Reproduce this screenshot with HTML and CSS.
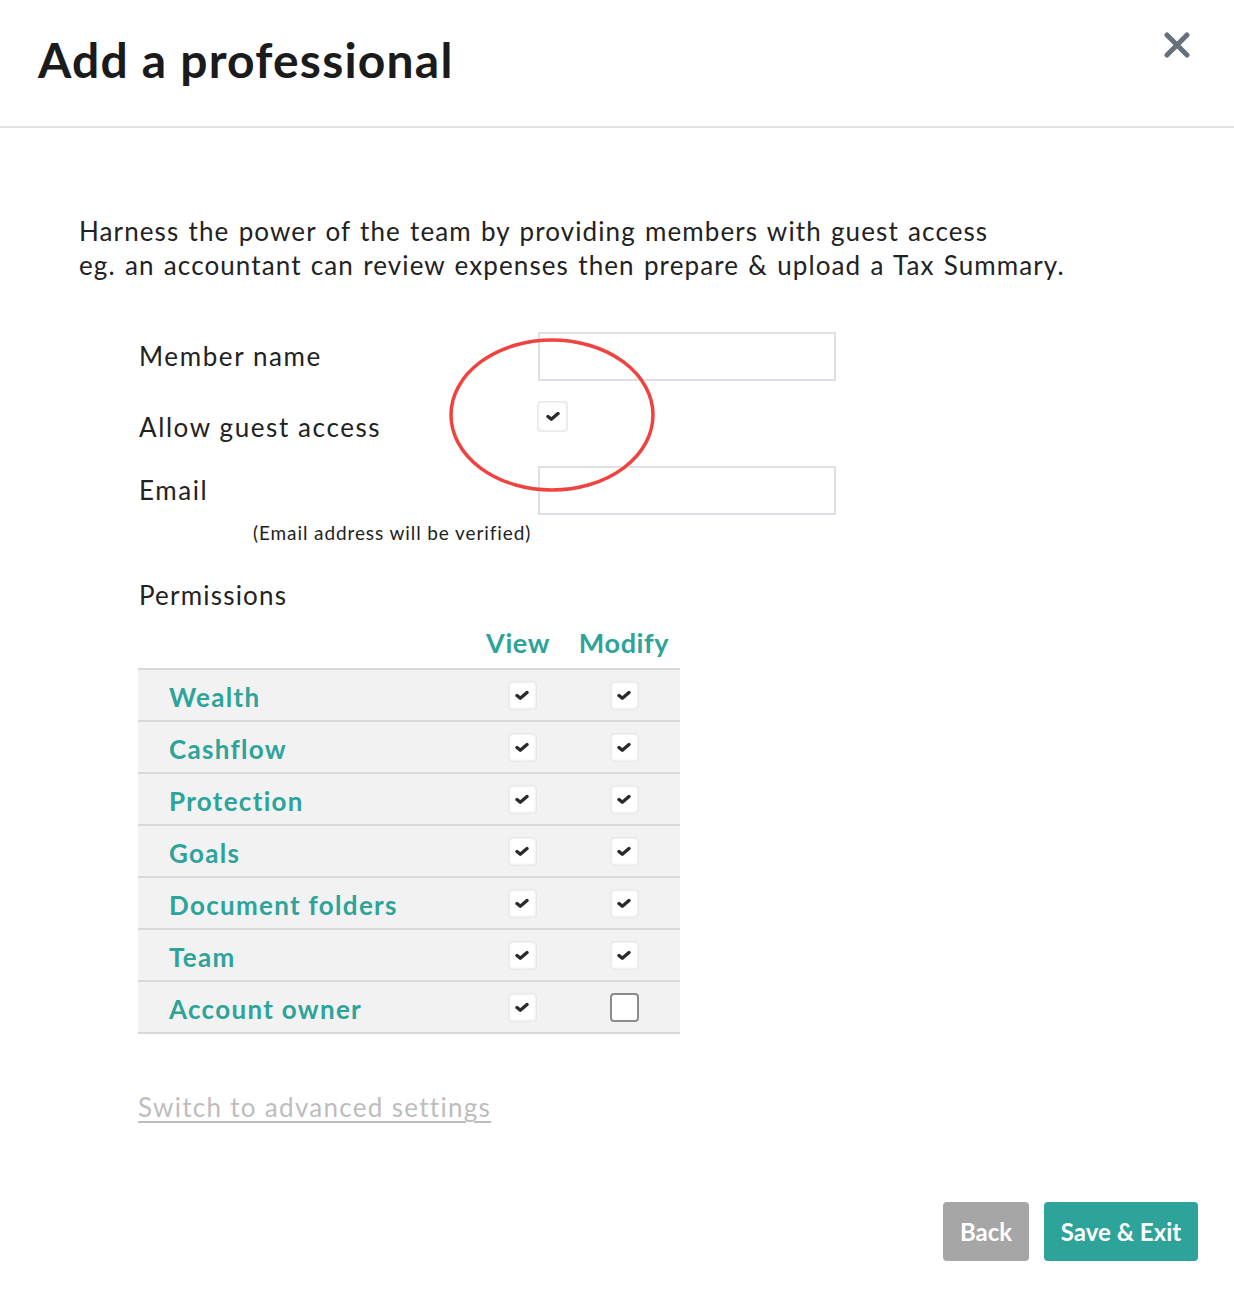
FILE: index.html
```html
<!DOCTYPE html>
<html lang="en">
<head>
<meta charset="utf-8">
<title>Add a professional</title>
<link rel="stylesheet" href="styles.css">
</head>
<body>
<div class="modal">
  <header class="modal-header">
    <h1 class="title">Add a professional</h1>
    <button class="close" aria-label="Close">
      <svg width="26" height="26" viewBox="0 0 26 26"><path d="M3 3 L23 23 M23 3 L3 23" stroke="#67717c" stroke-width="5" stroke-linecap="round"/></svg>
    </button>
  </header>
  <main class="modal-body">
    <p class="intro">Harness the power of the team by providing members with guest access<br>eg. an accountant can review expenses then prepare &amp; upload a Tax Summary.</p>
    <div class="form">
      <div class="row row-name">
        <label class="label">Member name</label>
        <div class="input"></div>
      </div>
      <div class="row row-guest">
        <label class="label">Allow guest access</label>
        <span class="cb cb-big checked"><svg viewBox="0 0 14 11"><path d="M2 5.5 L5.3 8.3 L12 2.5" fill="none" stroke="#2b2b2b" stroke-width="3.4" stroke-linecap="round" stroke-linejoin="round"/></svg></span>
      </div>
      <div class="row row-email">
        <label class="label">Email</label>
        <div class="input"></div>
      </div>
      <p class="note">(Email address will be verified)</p>
      <p class="perm-title">Permissions</p>
      <div class="perm-head">
        <span></span><span class="col-h">View</span><span class="col-h">Modify</span>
      </div>
      <div class="perm-table">
        <div class="perm-row"><span class="perm-name">Wealth</span><span class="cell"><span class="cb checked"><svg viewBox="0 0 14 11"><path d="M2 5.5 L5.3 8.3 L12 2.5" fill="none" stroke="#2b2b2b" stroke-width="3.4" stroke-linecap="round" stroke-linejoin="round"/></svg></span></span><span class="cell"><span class="cb checked"><svg viewBox="0 0 14 11"><path d="M2 5.5 L5.3 8.3 L12 2.5" fill="none" stroke="#2b2b2b" stroke-width="3.4" stroke-linecap="round" stroke-linejoin="round"/></svg></span></span></div>
        <div class="perm-row"><span class="perm-name">Cashflow</span><span class="cell"><span class="cb checked"><svg viewBox="0 0 14 11"><path d="M2 5.5 L5.3 8.3 L12 2.5" fill="none" stroke="#2b2b2b" stroke-width="3.4" stroke-linecap="round" stroke-linejoin="round"/></svg></span></span><span class="cell"><span class="cb checked"><svg viewBox="0 0 14 11"><path d="M2 5.5 L5.3 8.3 L12 2.5" fill="none" stroke="#2b2b2b" stroke-width="3.4" stroke-linecap="round" stroke-linejoin="round"/></svg></span></span></div>
        <div class="perm-row"><span class="perm-name">Protection</span><span class="cell"><span class="cb checked"><svg viewBox="0 0 14 11"><path d="M2 5.5 L5.3 8.3 L12 2.5" fill="none" stroke="#2b2b2b" stroke-width="3.4" stroke-linecap="round" stroke-linejoin="round"/></svg></span></span><span class="cell"><span class="cb checked"><svg viewBox="0 0 14 11"><path d="M2 5.5 L5.3 8.3 L12 2.5" fill="none" stroke="#2b2b2b" stroke-width="3.4" stroke-linecap="round" stroke-linejoin="round"/></svg></span></span></div>
        <div class="perm-row"><span class="perm-name">Goals</span><span class="cell"><span class="cb checked"><svg viewBox="0 0 14 11"><path d="M2 5.5 L5.3 8.3 L12 2.5" fill="none" stroke="#2b2b2b" stroke-width="3.4" stroke-linecap="round" stroke-linejoin="round"/></svg></span></span><span class="cell"><span class="cb checked"><svg viewBox="0 0 14 11"><path d="M2 5.5 L5.3 8.3 L12 2.5" fill="none" stroke="#2b2b2b" stroke-width="3.4" stroke-linecap="round" stroke-linejoin="round"/></svg></span></span></div>
        <div class="perm-row"><span class="perm-name">Document folders</span><span class="cell"><span class="cb checked"><svg viewBox="0 0 14 11"><path d="M2 5.5 L5.3 8.3 L12 2.5" fill="none" stroke="#2b2b2b" stroke-width="3.4" stroke-linecap="round" stroke-linejoin="round"/></svg></span></span><span class="cell"><span class="cb checked"><svg viewBox="0 0 14 11"><path d="M2 5.5 L5.3 8.3 L12 2.5" fill="none" stroke="#2b2b2b" stroke-width="3.4" stroke-linecap="round" stroke-linejoin="round"/></svg></span></span></div>
        <div class="perm-row"><span class="perm-name">Team</span><span class="cell"><span class="cb checked"><svg viewBox="0 0 14 11"><path d="M2 5.5 L5.3 8.3 L12 2.5" fill="none" stroke="#2b2b2b" stroke-width="3.4" stroke-linecap="round" stroke-linejoin="round"/></svg></span></span><span class="cell"><span class="cb checked"><svg viewBox="0 0 14 11"><path d="M2 5.5 L5.3 8.3 L12 2.5" fill="none" stroke="#2b2b2b" stroke-width="3.4" stroke-linecap="round" stroke-linejoin="round"/></svg></span></span></div>
        <div class="perm-row"><span class="perm-name">Account owner</span><span class="cell"><span class="cb checked"><svg viewBox="0 0 14 11"><path d="M2 5.5 L5.3 8.3 L12 2.5" fill="none" stroke="#2b2b2b" stroke-width="3.4" stroke-linecap="round" stroke-linejoin="round"/></svg></span></span><span class="cell"><span class="cb cb-empty"></span></span></div>
      </div>
      <a class="advanced" href="#">Switch to advanced settings</a>
      <svg class="annotation" width="214" height="162" viewBox="0 0 214 162"><ellipse cx="107" cy="81" rx="101" ry="75" fill="none" stroke="#f0433f" stroke-width="3.5"/></svg>
    </div>
    <div class="actions">
      <button class="btn btn-back">Back</button>
      <button class="btn btn-save">Save &amp; Exit</button>
    </div>
  </main>
</div>
</body>
</html>
```

FILE: styles.css
```css
* { box-sizing: border-box; }
html, body { margin: 0; padding: 0; background: #fff; }
body {
  font-family: Lato, "Open Sans", sans-serif;
  color: #1f1f1f;
  width: 1234px;
  height: 1300px;
  overflow: hidden;
}
.modal-header {
  height: 128px;
  border-bottom: 2px solid #dfe3e6;
  display: flex;
  justify-content: space-between;
  align-items: flex-start;
  padding: 0 37px 0 38px;
}
.title {
  margin: 30px 0 0;
  font-size: 48px;
  font-weight: 700;
  line-height: 60px;
  color: #1b1b1b;
  letter-spacing: 1.2px;
}
.close {
  margin-top: 32px;
  margin-right: 7px;
  background: none;
  border: 0;
  padding: 0;
  width: 26px;
  height: 26px;
  cursor: pointer;
}
.close svg { display: block; }
.modal-body { padding: 0 0 0 79px; }
.intro {
  margin: 86px 0 0;
  font-size: 26px;
  line-height: 34px;
  color: #222;
  letter-spacing: 1.1px;
  word-spacing: 1.5px;
  white-space: nowrap;
}
.form {
  position: relative;
  margin: 50px 0 0 60px;
}
.row { display: flex; align-items: flex-start; }
.label {
  width: 399px;
  font-size: 26px;
  color: #222;
  letter-spacing: 1.6px;
}
.row-name .label, .row-email .label { line-height: 49px; }
.row-guest { margin-top: 21px; }
.row-guest .label { line-height: 34px; margin-top: 8px; }
.row-email { margin-top: 22px; }
.input {
  width: 298px;
  height: 49px;
  border: 2px solid #dde1e5;
  background: #fff;
}
.note {
  margin: 6px 0 0 114px;
  font-size: 19px;
  line-height: 24px;
  color: #222;
  letter-spacing: 0.9px;
}
.perm-title {
  margin: 33px 0 0;
  font-size: 26px;
  line-height: 34px;
  color: #222;
  letter-spacing: 1.2px;
}
.perm-head, .perm-row {
  display: grid;
  grid-template-columns: 334px 100px 104px;
  width: 542px;
}
.perm-head { margin: 14px 0 0 -1px; }
.col-h {
  text-align: center;
  font-size: 27px;
  line-height: 34px;
  font-weight: 700;
  color: #2ea39a;
  letter-spacing: 0.6px;
}
.col-h:nth-child(2) { padding-right: 8px; }
.perm-table {
  margin: 8px 0 0 -1px;
  width: 542px;
  background: #f2f2f2;
  border-bottom: 2px solid #d9d9d9;
}
.perm-row {
  height: 52px;
  border-top: 2px solid #d9d9d9;
  align-items: center;
}
.perm-name {
  padding-left: 31px;
  font-size: 26px;
  font-weight: 700;
  color: #2ea39a;
  line-height: 34px;
  padding-top: 4px;
  letter-spacing: 1.3px;
}
.cell { display: flex; justify-content: center; }
.cb {
  width: 27px;
  height: 27px;
  border-radius: 3px;
  background: #fff;
  box-shadow: 0 0 0 1px #e8e8e8, inset 0 0 3px #dcdcdc;
  display: flex;
  align-items: center;
  justify-content: center;
}
.cb svg { width: 14px; height: 11px; display: block; }
.cb-big { width: 29px; height: 29px; }
.cb-empty {
  width: 29px;
  height: 29px;
  box-shadow: none;
  border: 2px solid #8c8c8c;
  border-radius: 4px;
}
.advanced {
  display: inline-block;
  margin-top: 56px;
  margin-left: -1px;
  font-size: 26px;
  line-height: 34px;
  color: #bdbdbd;
  letter-spacing: 1.3px;
  text-decoration: underline;
  text-decoration-thickness: 2px;
  text-underline-offset: 4px;
}
.annotation {
  position: absolute;
  left: 306px;
  top: 2px;
}
.actions {
  display: flex;
  justify-content: flex-end;
  gap: 15px;
  margin-top: 78px;
  padding-right: 36px;
}
.btn {
  height: 59px;
  border: 0;
  border-radius: 4px;
  color: #fff;
  font-family: Lato, "Open Sans", sans-serif;
  font-size: 24px;
  font-weight: 700;
  cursor: pointer;
}
.btn-back { width: 86px; background: #a6a6a6; }
.btn-save { width: 154px; background: #2ea39a; }
```
